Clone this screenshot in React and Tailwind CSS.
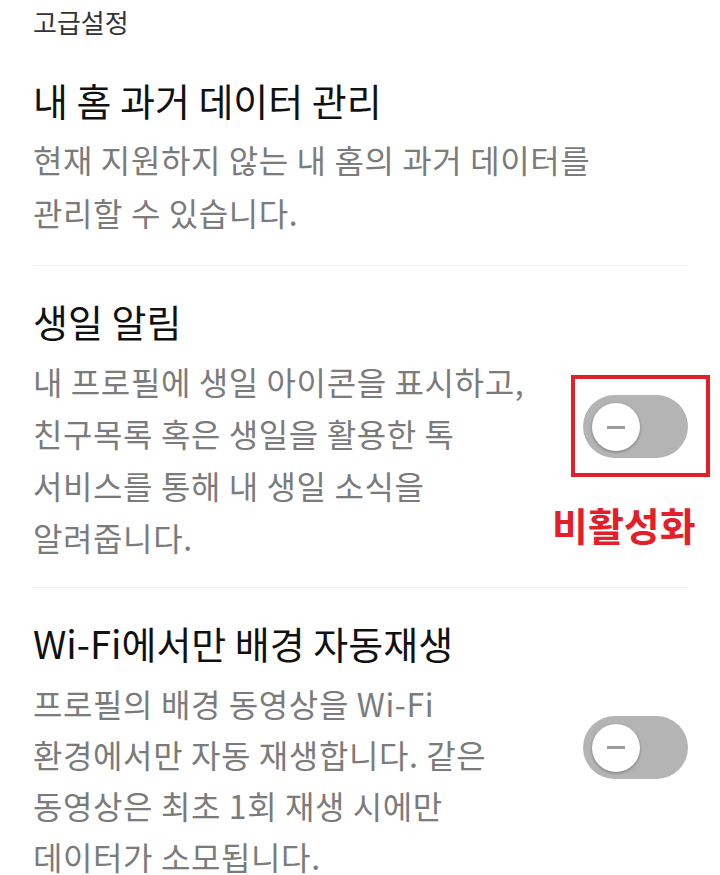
import React from "react";

const font = { fontFamily: '"Noto Sans CJK KR", "Noto Sans", sans-serif' };

function Toggle({ annotated }) {
  return (
    <div className="relative shrink-0 w-[105px] h-[63px]">
      {annotated && (
        <>
          <div className="absolute left-[-12px] right-[-22px] top-[-20px] bottom-[-19px] border-[4px] border-[#e3202a]" />
          <div className="absolute left-[-31px] top-[107px] whitespace-nowrap text-[39px] leading-[44px] font-bold text-[#e3202a]">
            비활성화
          </div>
        </>
      )}
      <div className="relative w-[105px] h-[63px] rounded-full bg-[#b4b4b4]">
        <div className="absolute left-[9px] top-[8px] w-[48px] h-[48px] rounded-full bg-white shadow-[0_1px_3px_rgba(0,0,0,0.35)] flex items-center justify-center">
          <div className="w-[18px] h-[3px] bg-[#9c9c9c]" />
        </div>
      </div>
    </div>
  );
}

export default function App() {
  return (
    <div style={font} className="w-[720px] h-[875px] overflow-hidden bg-white pl-[33px] pr-[32px]">
      <div className="pt-[6px] text-[26px] leading-[32px] text-[#333333]">고급설정</div>

      <section className="pt-[38px] pb-[26px]">
        <div className="text-[38px] leading-[48px] text-[#111111]">내 홈 과거 데이터 관리</div>
        <div className="mt-[9px] text-[32px] leading-[53px] tracking-[0.6px] text-[#7b7b7b]">
          현재 지원하지 않는 내 홈의 과거 데이터를
          <br />
          관리할 수 있습니다.
        </div>
      </section>
      <div className="h-px bg-[#f1f1f1]" />

      <section className="flex items-center justify-between">
        <div className="pt-[31px] pb-[24px]">
          <div className="text-[38px] leading-[48px] text-[#111111]">생일 알림</div>
          <div className="mt-[10px] text-[32px] leading-[52px] tracking-[0.6px] text-[#7b7b7b]">
            내 프로필에 생일 아이콘을 표시하고,
            <br />
            친구목록 혹은 생일을 활용한 톡
            <br />
            서비스를 통해 내 생일 소식을
            <br />
            알려줍니다.
          </div>
        </div>
        <Toggle annotated />
      </section>
      <div className="h-px bg-[#f1f1f1]" />

      <section className="flex items-center justify-between">
        <div className="pt-[31px] pb-[24px]">
          <div className="text-[38px] leading-[48px] text-[#111111]">Wi-Fi에서만 배경 자동재생</div>
          <div className="mt-[11px] text-[32px] leading-[51px] tracking-[0.6px] text-[#7b7b7b]">
            프로필의 배경 동영상을 Wi-Fi
            <br />
            환경에서만 자동 재생합니다. 같은
            <br />
            동영상은 최초 1회 재생 시에만
            <br />
            데이터가 소모됩니다.
          </div>
        </div>
        <Toggle />
      </section>
    </div>
  );
}
